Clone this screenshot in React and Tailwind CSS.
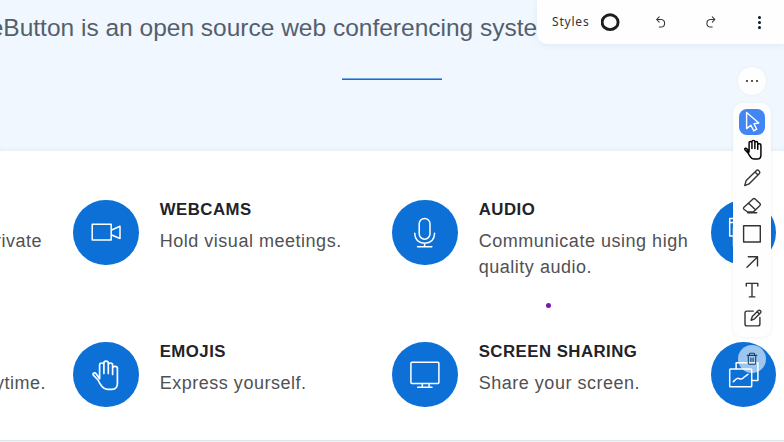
import React from "react";

const iconProps = {
  fill: "none",
  stroke: "currentColor",
  strokeLinecap: "round",
  strokeLinejoin: "round",
};

const HAND = "M26.6 36.5V23Q26.6 21 28.7 21Q30.9 21 30.9 23V31.5M30.9 30V21.2Q30.9 19.2 33 19.2Q35.3 19.2 35.3 21.2V31.5M35.3 23Q35.3 21 37.4 21Q39.6 21 39.6 23V32.5M39.6 27V26.2Q39.8 24.4 42 24.4Q44.4 24.4 44.4 26.6V41.5Q44.4 47.3 38.8 47.3H34.2Q31.2 47.3 29 44.5Q26.3 41 25 38L20.4 33.2Q19.5 31.8 20.8 31.1Q22.1 30.6 23.1 31.8L26.6 36.7";

function Webcam() {
  return (
    <svg width="66" height="66" viewBox="0 0 66 66" strokeWidth="1.5" {...iconProps}>
      <path d="M19.2 24.3H38.2V40.1H19.2ZM38.7 30L47 26.3V38.5L38.7 35" />
    </svg>
  );
}

function Mic() {
  return (
    <svg width="66" height="66" viewBox="0 0 66 66" strokeWidth="1.5" {...iconProps}>
      <rect x="27.2" y="18.4" width="10.8" height="20.8" rx="5.4" />
      <path d="M22.7 33.3Q23.2 43.2 32.6 43.2Q42.2 43.2 42.6 33.3M32.6 43.2V46.5M25.5 46.7H39.8" />
    </svg>
  );
}

function RaisedHand() {
  return (
    <svg width="66" height="66" viewBox="0 0 66 66" strokeWidth="1.7" {...iconProps}>
      <path d={HAND} />
    </svg>
  );
}

function Monitor() {
  return (
    <svg width="66" height="66" viewBox="0 0 66 66" strokeWidth="1.5" {...iconProps}>
      <rect x="18.9" y="20.2" width="28" height="21.3" rx="1" />
      <path d="M30.3 42V45M37.1 42V45M25.7 45.3H40" />
    </svg>
  );
}

function Windows() {
  return (
    <svg width="66" height="66" viewBox="0 0 66 66" strokeWidth="1.5" {...iconProps}>
      <path d="M18.7 18.5H38V36H18.7ZM18.7 22.5H38M22.5 28V46H46V25H22.5" />
    </svg>
  );
}

function Charts() {
  return (
    <svg width="66" height="66" viewBox="0 0 66 66" strokeWidth="1.5" {...iconProps}>
      <rect x="18.7" y="27" width="22" height="17.8" rx=".8" />
      <path d="M25.1 26.5V21Q25.1 20.8 25.4 20.8H46.4Q46.9 20.8 46.9 21.3V38.6H41M22.3 39.7C25 37 26 35.7 27.6 36.4C29.5 37.2 30 38 32.2 36C34 34 34.5 34.4 37 32.3" />
    </svg>
  );
}

function Feature({ icon, title, children }) {
  return (
    <article className="flex h-[142px] shrink-0">
      <div className="h-[65.5px] w-[65.5px] shrink-0 overflow-hidden rounded-full bg-[#0c70d7] text-white">{icon}</div>
      {title && (
        <div className="ml-[21.2px] w-[225px] font-['Liberation_Sans',sans-serif] whitespace-nowrap">
          <h3 className="text-[16.8px] leading-5 font-bold tracking-[0.48px] text-[#212329]">{title}</h3>
          <p className="mt-[8px] text-[18px] leading-[26px] tracking-[0.52px] text-[#505153]">{children}</p>
        </div>
      )}
    </article>
  );
}

const tools = [
  ["Select", <path key="p" d="M7.6 3.5L19.8 14L15 14.7L17.7 20.2L14.7 21.8L11.9 16.2L7.6 19.6Z" />],
  ["Hand", <path key="p" transform="translate(-7.6 -9.4) scale(.665)" strokeWidth="2.2" d={HAND} />],
  ["Draw", <path key="p" d="M5.7 20.6L7.2 15.4L17.5 5.4Q18.6 4.5 19.7 5.6L20.4 6.4Q21.4 7.5 20.2 8.7L10 18.9L5.7 20.6ZM16 7L18.8 9.8" />],
  ["Eraser", <path key="p" d="M4.7 14.6L14 6Q15 5.1 16.1 6L21 10.6Q21.8 11.5 21 12.4L14.3 19H8.7L4.8 16.2Q4.2 15.4 4.7 14.6ZM9.6 10.2L16.5 16.8M8.7 19.8H17.7" />],
  ["Rectangle", <rect key="p" x="4.6" y="4.7" width="16.7" height="16.3" />],
  ["Arrow", <path key="p" d="M8 18.2L18.4 7.9M9.3 7.8H18.5V16.9" />],
  ["Text", <path key="p" d="M7.3 9V6.4H18.8V9M13 6.4V19.9M10.3 19.9H15.8" />],
  ["Note", <path key="p" d="M14.3 6.1H7.9Q6 6.1 6 8V19Q6 20.9 7.9 20.9H19Q20.9 20.9 20.9 19V12.5M12.1 15.3L13.3 11.5L19.3 5.6Q20.4 4.7 21.4 5.7Q22.5 6.8 21.6 7.7L15.6 13.8L12.1 15.3ZM18.2 6.7L20.5 9" />],
];

function Toolbar() {
  return (
    <aside className="absolute top-[67px] left-[733px] flex w-[38px] flex-col items-center">
      <button className="flex h-7 w-7 items-center justify-center gap-[3px] rounded-full bg-[#fefefe] shadow-[0_0_3px_rgba(0,0,0,0.05)]" aria-label="More tools">
        <i className="h-[2px] w-[2px] rounded-full bg-[#222]" />
        <i className="h-[2px] w-[2px] rounded-full bg-[#222]" />
        <i className="h-[2px] w-[2px] rounded-full bg-[#222]" />
      </button>
      <div className="mt-2 flex h-[234px] w-[38px] flex-col items-center gap-[2px] rounded-[10px] bg-[#fefefe] pt-[6px] shadow-[0_1px_4px_rgba(0,0,0,0.06)]">
        {tools.map(([name, shape], index) => (
          <button key={name} aria-label={name} className={index === 0 ? "h-[26px] w-[26px] rounded-[8px] bg-[#4285f4] text-white" : index === 1 ? "h-[26px] w-[26px] text-black" : "h-[26px] w-[26px] text-[#333]"}>
            <svg width="26" height="26" viewBox="0 0 26 26" strokeWidth="1.4" {...iconProps}>{shape}</svg>
          </button>
        ))}
      </div>
      <button aria-label="Delete" className="mt-2 flex h-7 w-7 items-center justify-center rounded-full bg-white/60 text-[#173f70]">
        <svg width="12" height="14" viewBox="0 0 12 14" strokeWidth="1.1" {...iconProps}>
          <path d="M1.2 3.4H10.8M3.5 3.2V2Q3.5 1.3 4.3 1.3H7.7Q8.5 1.3 8.5 2V3.2M2.3 3.7V11.3Q2.3 12.2 3.2 12.2H8.8Q9.7 12.2 9.7 11.3V3.7M4.9 6V9.8M7.1 6V9.8" />
        </svg>
      </button>
    </aside>
  );
}

function StyleBar() {
  return (
    <nav className="absolute top-0 right-0 flex h-11 w-[247px] items-center rounded-bl-[10px] bg-[#fefefe] text-[#333] shadow-[0_2px_7px_rgba(40,70,100,0.07)]">
      <span className="ml-[15px] w-[48.5px] font-['Noto_Sans',sans-serif] text-[12px] tracking-[0.8px]">Styles</span>
      <svg width="19" height="19" viewBox="0 0 19 19" fill="none" stroke="#1d1d1d" strokeWidth="2.9"><ellipse cx="9.1" cy="9.2" rx="8" ry="7.4" /></svg>
      <svg className="ml-[35.3px]" width="12" height="14" viewBox="0 0 12 14" strokeWidth="1.05" {...iconProps}><path d="M4.2 1.9L1.6 4.5L4.2 7.1M1.7 4.5H6.2Q9.6 4.8 9.6 8.4Q9.6 12 6 12H4.3" /></svg>
      <svg className="ml-[38px]" width="12" height="14" viewBox="0 0 12 14" strokeWidth="1.05" {...iconProps}><path d="M7.3 1.9L9.9 4.5L7.3 7.1M9.8 4.5H5.3Q1.9 4.8 1.9 8.4Q1.9 12 5.5 12H7.2" /></svg>
      <span className="ml-[41.2px] flex flex-col gap-[2px]">
        <i className="h-[3px] w-[3px] rounded-full bg-[#06172a]" />
        <i className="h-[3px] w-[3px] rounded-full bg-[#06172a]" />
        <i className="h-[3px] w-[3px] rounded-full bg-[#06172a]" />
      </span>
    </nav>
  );
}

export default function App() {
  return (
    <main className="relative flex h-[442px] w-[784px] flex-col overflow-hidden bg-white">
      <header className="flex h-[151px] shrink-0 flex-col items-start bg-[#f0f7ff] pt-3 shadow-[inset_0_-3px_4px_-2px_rgba(40,70,100,0.06)]">
        <p className="-ml-[10.3px] font-['Liberation_Sans',sans-serif] text-[24.5px] leading-8 whitespace-nowrap text-[#53606c]">eButton is an open source web conferencing syste</p>
        <div className="mt-[34px] ml-[342px] h-[2px] w-[100px] border-t border-[#70a9e4] bg-[#1370d0]" />
      </header>
      <section className="flex h-[289px] shrink-0 pt-[48.7px]">
        <div className="w-[73px] shrink-0 overflow-hidden font-['Liberation_Sans',sans-serif] text-[18px] leading-[26px] tracking-[0.5px] text-[#505153]">
          <p className="mt-[28px] flex h-[142px] justify-end pr-[31px]">private</p>
          <p className="flex justify-end pr-[27px]">anytime.</p>
        </div>
        <div className="flex w-[319px] shrink-0 flex-col">
          <Feature icon={<Webcam />} title="WEBCAMS">Hold visual meetings.</Feature>
          <Feature icon={<RaisedHand />} title="EMOJIS">Express yourself.</Feature>
        </div>
        <div className="flex w-[318.5px] shrink-0 flex-col">
          <Feature icon={<Mic />} title="AUDIO">Communicate using high<br />quality audio.</Feature>
          <Feature icon={<Monitor />} title="SCREEN SHARING">Share your screen.</Feature>
        </div>
        <div className="flex flex-col">
          <Feature icon={<Windows />} />
          <Feature icon={<Charts />} />
        </div>
      </section>
      <footer className="h-[2px] border-t border-[#dfe5eb] bg-[#eef3f7]" />
      <StyleBar />
      <Toolbar />
      <span className="absolute top-[303px] left-[546px] h-[5px] w-[5px] rounded-full bg-[#7719aa]" />
    </main>
  );
}
